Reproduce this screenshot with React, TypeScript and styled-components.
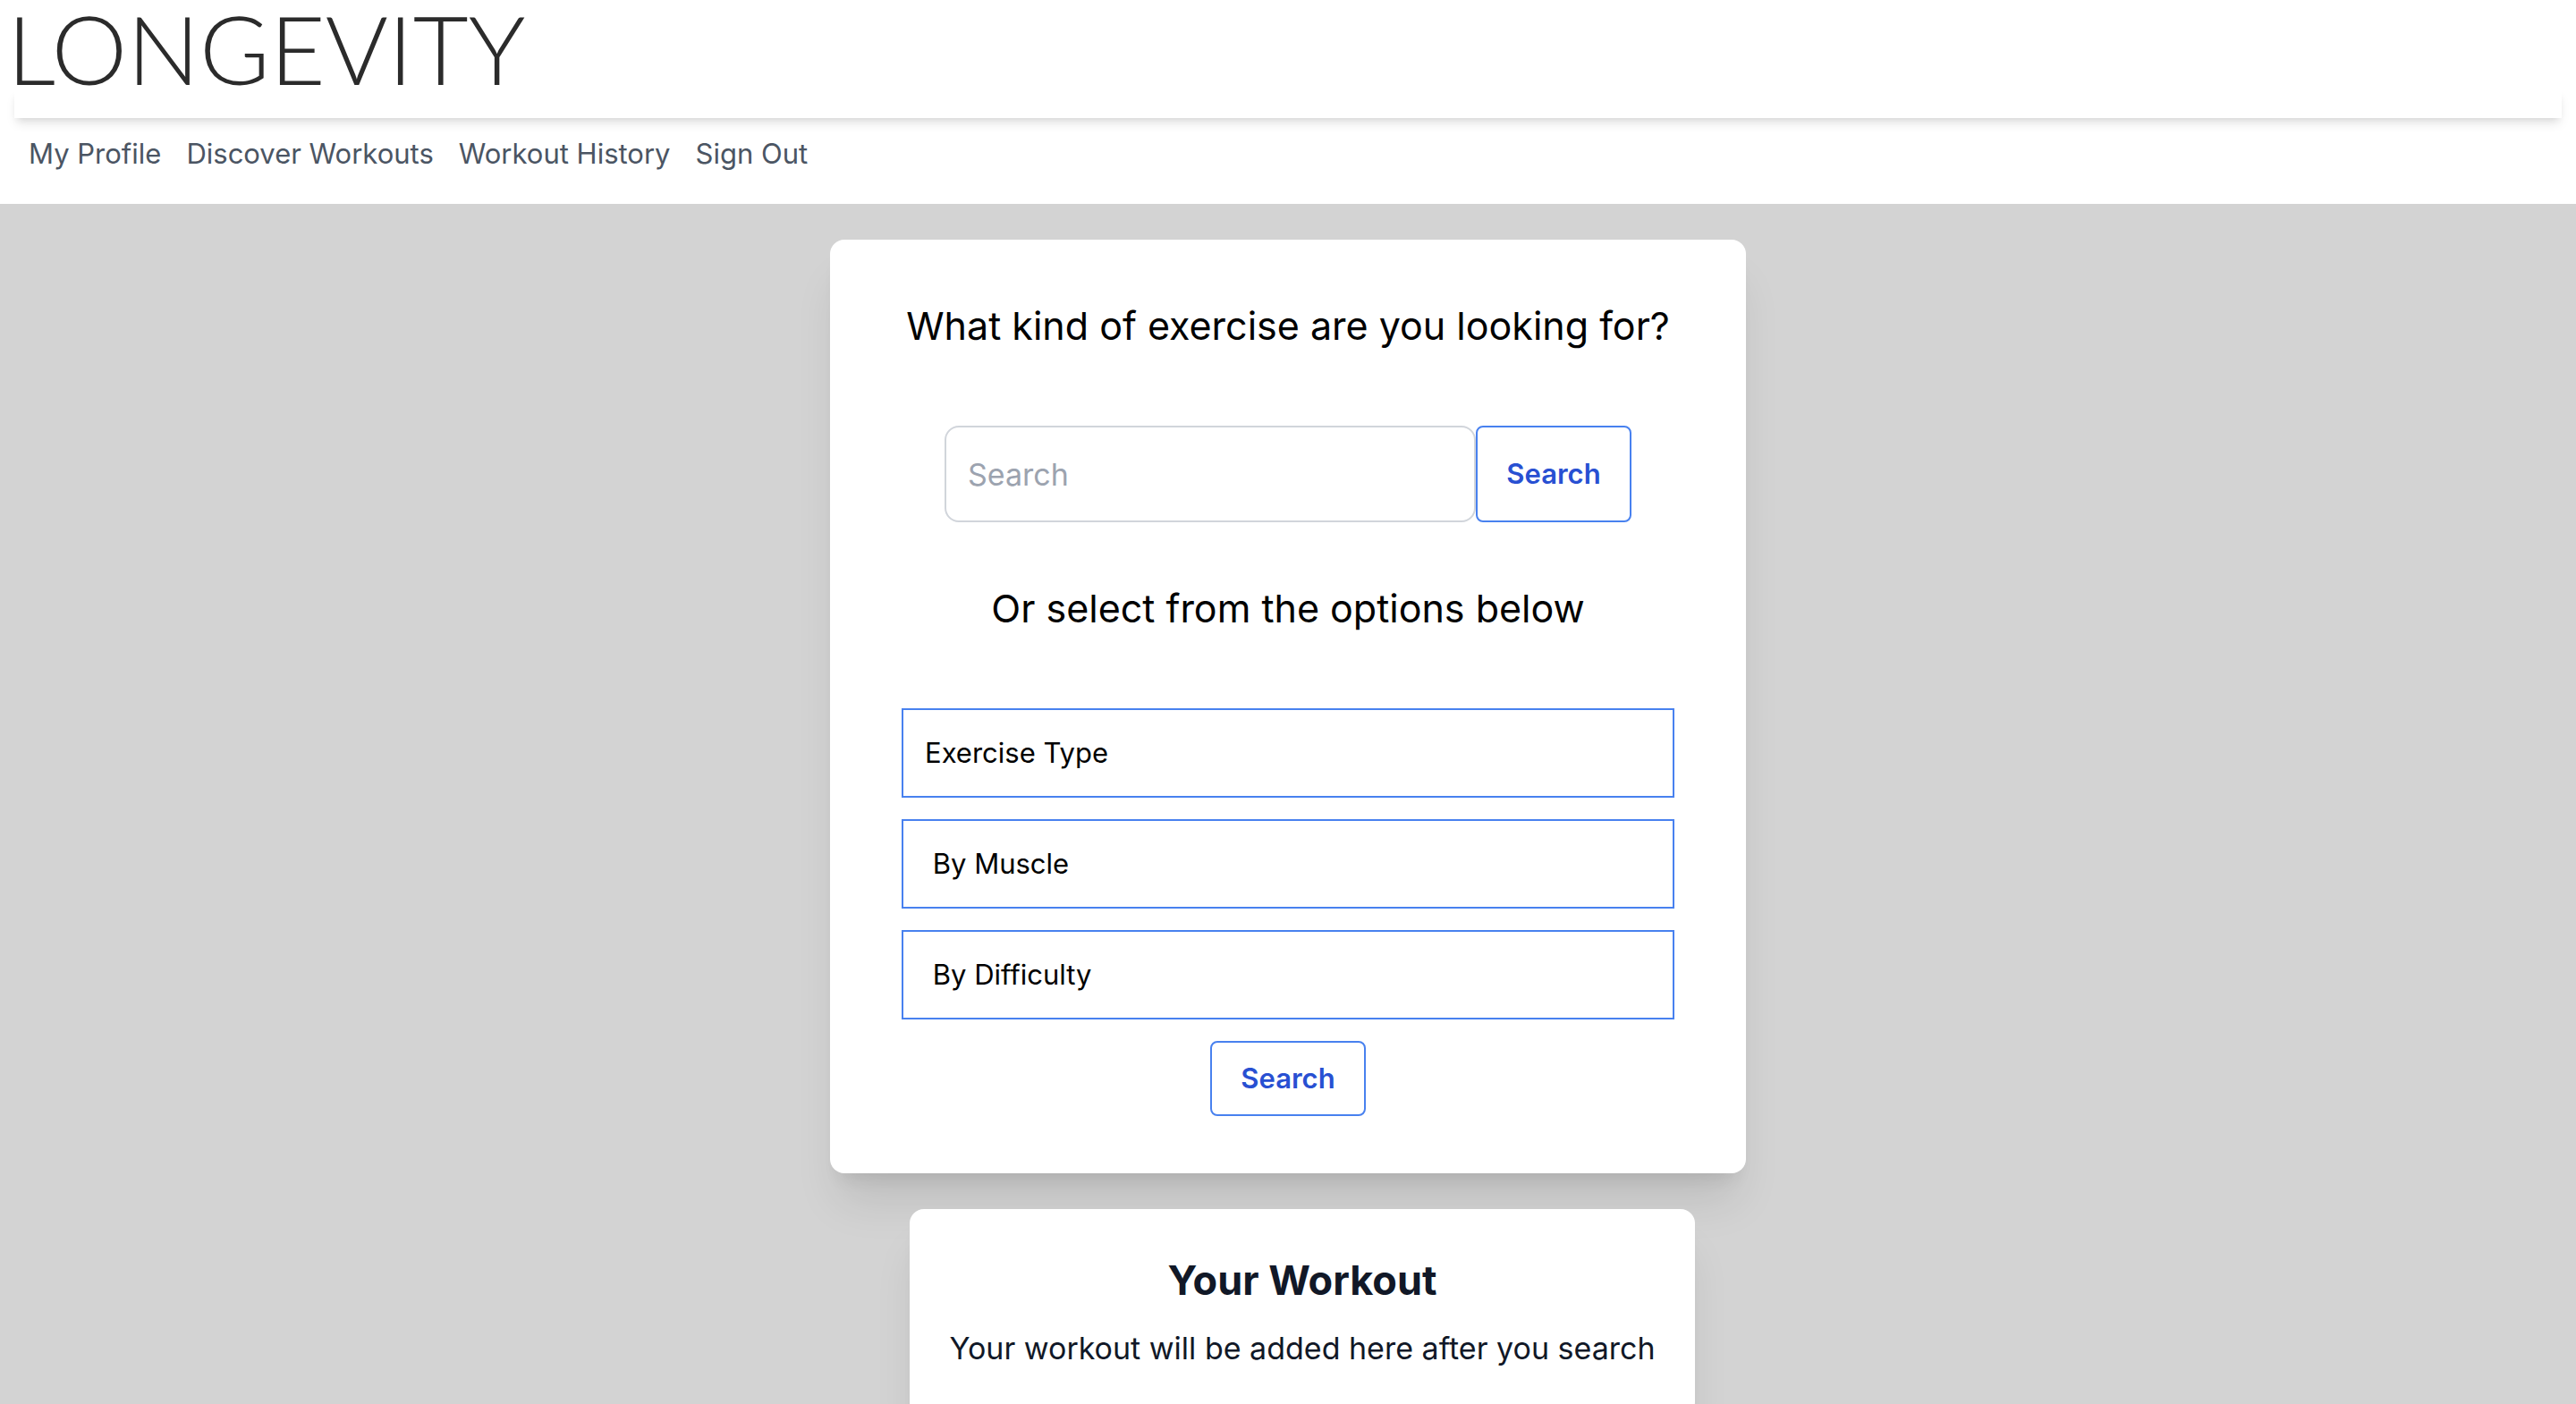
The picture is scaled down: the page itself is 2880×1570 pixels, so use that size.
import React from "react";
import styled, { createGlobalStyle } from "styled-components";

const GlobalStyle = createGlobalStyle`
  *, *::before, *::after { box-sizing: border-box; }
  html { scrollbar-width: none; background: #d3d3d3; }
  body {
    margin: 0;
    font-family: Inter, "Liberation Sans", sans-serif;
    font-size: 31px;
    line-height: 48px;
    color: #000;
  }
  h1, h2, p { margin: 0; }
  button, input, select { font: inherit; margin: 0; }
`;

const Header = styled.header`
  background: #fff;
`;

const Brand = styled.a`
  display: block;
  height: 100px;
  padding: 0 8px;
  font-family: Lato, sans-serif;
  font-size: 107px;
  font-weight: 300;
  line-height: 108px;
  color: #2b2b2b;
  text-decoration: none;
  white-space: nowrap;
`;

const HeaderRule = styled.div`
  height: 32px;
  margin: 0 16px;
  box-shadow: 0 8px 12px -2px rgba(0, 0, 0, 0.1), 0 4px 8px -4px rgba(0, 0, 0, 0.1);
`;

const Nav = styled.nav`
  display: flex;
  flex-wrap: wrap;
  gap: 28px;
  padding: 16px 32px 32px;
`;

const NavLink = styled.a`
  color: #4b5563;
  text-decoration: none;
`;

const Main = styled.main`
  display: flex;
  flex-direction: column;
  align-items: center;
  gap: 40px;
  padding: 40px 32px;
`;

const Card = styled.section`
  display: flex;
  flex-direction: column;
  align-items: center;
  width: 100%;
  background: #fff;
  border-radius: 16px;
  box-shadow: 0 40px 50px -10px rgba(0, 0, 0, 0.1), 0 16px 20px -12px rgba(0, 0, 0, 0.1);
`;

const FinderCard = styled(Card)`
  max-width: 1024px;
  padding: 64px 80px;
`;

const WorkoutCard = styled(Card)`
  gap: 16px;
  max-width: 878px;
  margin-left: 32px;
  padding: 48px 40px;
  color: #111827;
  text-align: center;
`;

const Prompt = styled.h2`
  font-size: 43px;
  font-weight: 400;
  line-height: 64px;
  text-align: center;
`;

const SearchForm = styled.form`
  display: flex;
  justify-content: center;
  width: 100%;
  margin: 80px 0 64px;
`;

const SearchField = styled.input`
  width: 594px;
  min-width: 0;
  height: 108px;
  padding: 0 24px;
  border: 2px solid #d1d5db;
  border-radius: 16px;
  background: #fff;
  font-size: 34px;
  &::placeholder { color: #9ca3af; opacity: 1; }
`;

const OutlineButton = styled.button`
  min-width: 174px;
  padding: 16px 32px;
  border: 2px solid #4881ef;
  border-radius: 8px;
  background: transparent;
  color: #2850d2;
  font-weight: 600;
  cursor: pointer;
`;

const FilterForm = styled.form`
  display: flex;
  flex-direction: column;
  align-items: center;
  gap: 24px;
  width: 100%;
  max-width: 864px;
  margin-top: 80px;
`;

const FilterSelect = styled.select`
  appearance: none;
  width: 100%;
  height: 100px;
  padding: 0 24px;
  border: 2px solid #4881ef;
  border-radius: 0;
  background: #fff;
  color: #000;
`;

const WorkoutTitle = styled.h2`
  font-size: 45px;
  font-weight: 700;
  line-height: 64px;
`;

const WorkoutText = styled.p`
  font-size: 34px;
  line-height: 56px;
`;

const links = ["My Profile", "Discover Workouts", "Workout History", "Sign Out"];

const filters = [
  { id: "type", name: "Exercise type", text: "Exercise Type" },
  { id: "muscle", name: "Muscle", text: "\u00a0By Muscle" },
  { id: "difficulty", name: "Difficulty", text: "\u00a0By Difficulty" },
];

export default function App() {
  const stop = (event: React.FormEvent) => event.preventDefault();
  return (
    <>
      <GlobalStyle />
      <Header>
        <Brand href="#">LONGEVITY</Brand>
        <HeaderRule />
        <Nav aria-label="Main">
          {links.map((link) => (
            <NavLink key={link} href="#">{link}</NavLink>
          ))}
        </Nav>
      </Header>
      <Main>
        <FinderCard>
          <Prompt>What kind of exercise are you looking for?</Prompt>
          <SearchForm onSubmit={stop}>
            <SearchField type="text" placeholder="Search" aria-label="Search exercises" />
            <OutlineButton type="submit">Search</OutlineButton>
          </SearchForm>
          <Prompt>Or select from the options below</Prompt>
          <FilterForm onSubmit={stop}>
            {filters.map((filter) => (
              <FilterSelect key={filter.id} aria-label={filter.name}>
                <option>{filter.text}</option>
              </FilterSelect>
            ))}
            <OutlineButton type="submit">Search</OutlineButton>
          </FilterForm>
        </FinderCard>
        <WorkoutCard>
          <WorkoutTitle>Your Workout</WorkoutTitle>
          <WorkoutText>Your workout will be added here after you search</WorkoutText>
        </WorkoutCard>
      </Main>
    </>
  );
}
